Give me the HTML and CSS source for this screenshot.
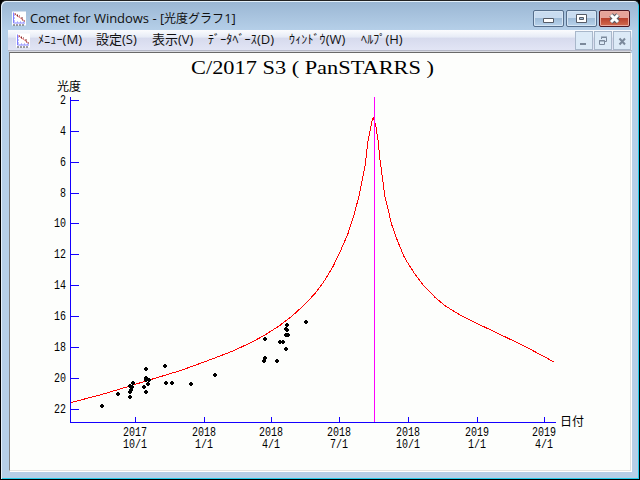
FILE: index.html
```html
<!DOCTYPE html>
<html lang="ja">
<head>
    <meta charset="UTF-8">
    <title>Comet for Windows</title>
    <link rel="stylesheet" href="styles.css">
</head>
<body>
    <svg class="defs" width="0" height="0">
        <symbol id="appIcon" viewBox="0 0 14 14">
            <rect width="14" height="14" fill="#fff"/>
            <path d="M1.5 1V11.5H13M2 3.5h1M2 6.5h1M2 9.5h1M5.5 10v1M8.5 10v1M11.5 10v1" fill="none" stroke="#8080ff"/>
            <path d="M2 2L12.5 9.5" stroke="#f08080"/>
            <path d="M3 2h1v1h-1zM5 3h1v2h-1zM7 4h1v1h-1zM9 6h2v1h-2zM10 8h1v1h-1zM12 9h1v1h-1z" fill="#803030"/>
            <path d="M1 13.5h12" stroke="#444" stroke-dasharray="2 1"/>
        </symbol>
    </svg>
    <div class="window">
        <div class="titlebar">
            <svg class="icon" width="14" height="15"><use href="#appIcon"/></svg>
            <span class="caption">Comet for Windows - [<i>光度グラフ</i>1]</span>
            <div class="buttons">
                <svg class="btn" width="31" height="17"><path d="M10.5 8.5h10v4h-10z" fill="#fff" stroke="#555b66"/></svg>
                <svg class="btn" width="31" height="17"><path d="M10.5 4.5h10v8h-10zM13.5 7.5v2h4v-2z" fill="#fff" fill-rule="evenodd" stroke="#555b66"/></svg>
                <svg class="btn close" width="31" height="17"><path d="M12 5L19 12M19 5L12 12" stroke="#555b66" stroke-width="5"/><path d="M12 5L19 12M19 5L12 12" stroke="#fff" stroke-width="3"/></svg>
            </div>
        </div>
        <div class="menubar">
            <svg class="icon" width="14" height="15"><use href="#appIcon"/></svg>
            <div class="menu">
                <span><i>ﾒﾆｭｰ</i>(M)</span>
                <span>設定(S)</span>
                <span>表示(V)</span>
                <span><i>ﾃﾞｰﾀﾍﾞｰｽ</i>(D)</span>
                <span><i>ｳｨﾝﾄﾞｳ</i>(W)</span>
                <span><i>ﾍﾙﾌﾟ</i>(H)</span>
            </div>
            <div class="mdi">
                <svg class="mdi-btn" width="18" height="19"><path d="M4 12h6" stroke="#7b899b" stroke-width="2"/></svg>
                <svg class="mdi-btn" width="18" height="19"><path d="M6.5 7V5.5h5v4h-2M6 5h6M4.5 8.5h5v4h-5zM4 9h6" fill="none" stroke="#7b899b"/></svg>
                <svg class="mdi-btn" width="18" height="19"><path d="M5.5 6.5L11 12.5M11 6.5L5.5 12.5" stroke="#7b899b" stroke-width="2"/></svg>
            </div>
        </div>
        <div class="client">
            <svg id="graph" width="620" height="417" viewBox="10 53 620 417">
                <text class="title" x="191" y="74" textLength="243" lengthAdjust="spacingAndGlyphs">C/2017 S3 ( PanSTARRS )</text>
                <text class="label" x="57" y="91">光度</text>
                <text class="label" x="560" y="426">日付</text>
                <rect class="axis" x="70" y="97" width="1" height="326"/>
                <rect class="axis" x="70" y="422" width="486" height="1"/>
                <g id="ticks"></g>
                <polyline class="curve" points="71,402.5 100,395 130,386 146,381 180,370.7 200,363.5 220,356 233,351 252,342 265,335 280,325.3 292,316 303.5,305.7 315,293.5 325,280 333,266.5 340,252 348,233.5 353.5,216.8 359.5,194 362.5,178 365.3,165 367.7,143 371.5,123.5 372.5,118.5 373.5,118 374.5,121 376,127 378,140 379.8,158 382.3,177 385,197 388,209 391.5,224 397,239.5 403.5,255.5 407.5,262.5 415,274.3 423.5,285.5 435,297.3 445,305.7 454,311.3 463.5,316.9 477,323.5 493.5,331.3 510,339.2 527,347.5 543,356 554,362"/>
                <rect class="now" x="374" y="97" width="1" height="325"/>
                <g id="dots"></g>
            </svg>
        </div>
    </div>
    <script src="graph.js"></script>
</body>
</html>
```
FILE: styles.css
```css
body {
    margin: 0;
    background-color: #000;
    overflow: hidden;
}

i {
    font-style: normal;
}

.defs {
    position: absolute;
}

.window {
    box-sizing: border-box;
    width: 640px;
    height: 480px;
    padding: 1px 7px 0;
    border: 1px solid #000;
    border-top-color: #222;
    border-radius: 6px 6px 0 0;
    background: linear-gradient(#9ab6d3, #b6d0e9 30px, #b6cfe7 100%);
    box-shadow: inset 1px 1px #e4f0fa, inset -1px -1px #25cbe9;
    font-family: "Open Sans", "Noto Sans CJK JP", sans-serif;
}

.titlebar {
    display: flex;
    height: 28px;
    align-items: flex-start;
}

.titlebar .icon {
    margin: 9px 0 0 4px;
}

.caption {
    margin: 7px 0 0 4px;
    font-size: 13px;
    line-height: 19px;
    letter-spacing: -0.03px;
    white-space: nowrap;
    color: #101010;
}

.caption i {
    font-size: 12px;
    letter-spacing: 0;
}

.buttons {
    display: flex;
    gap: 2px;
    margin: 8px 2px 0 auto;
}

.btn {
    box-sizing: border-box;
    width: 31px;
    height: 17px;
    border: 1px solid #566e8b;
    border-radius: 2px;
    background: linear-gradient(#c9dcf0 48%, #9fbcd8 50%, #b9d3eb);
    box-shadow: inset 0 0 0 1px #d5e5f4;
}

.btn path {
    transform: translate(-1px, -1px);
}

.close {
    border-color: #4b1520;
    background: linear-gradient(#e5a399 48%, #b9412d 50%, #d16c50);
    box-shadow: inset 0 0 0 1px #e8aaa0;
}

.menubar {
    display: flex;
    height: 20px;
    background: linear-gradient(#fbfcfe, #e6ebf6 36%, #d6daed 40%, #e2e5f5);
    border-bottom: 1px solid #b5b8c6;
}

.menubar .icon {
    margin: 3px 8px 0;
}

.menu {
    display: grid;
    grid-template-columns: 58px 56px 56px 81px 72px 60px;
    font-size: 13px;
    line-height: 19px;
    white-space: nowrap;
    color: #101010;
}

.menu i {
    font-size: 12px;
    letter-spacing: 0.15px;
}

.mdi {
    display: flex;
    gap: 1px;
    margin: 1px 1px 0 auto;
}

.mdi-btn {
    box-sizing: border-box;
    border: 1px solid #a8b7ca;
    background-color: #dceaf7;
}

.client {
    height: 417px;
    margin: 1px 1px 0;
    border: 1px solid #808080;
    border-top-color: #696969;
    border-right-color: #e3e3df;
    border-bottom-color: #e3e3df;
    background-color: #fdfefc;
    box-shadow: 1px 1px #fff, 0 -1px #d8dae0;
}

#graph {
    display: block;
    shape-rendering: crispEdges;
}

.title {
    font-family: "Liberation Serif", serif;
    font-size: 19px;
}

.label {
    font-family: "Noto Sans CJK JP", sans-serif;
    font-size: 12px;
}

.num {
    font-family: "Liberation Mono", monospace;
    font-size: 13px;
}

.axis {
    fill: #1400ff;
}

.curve {
    fill: none;
    stroke: #f00;
}

.now {
    fill: #f0f;
}
```
FILE: graph.js
```javascript
const ns = "http://www.w3.org/2000/svg";
const ticks = document.getElementById("ticks");
const dots = document.getElementById("dots");

function add(parent, name, attrs, text) {
    const el = document.createElementNS(ns, name);
    for (const key in attrs) el.setAttribute(key, attrs[key]);
    if (text) el.textContent = text;
    parent.appendChild(el);
}

function addNumber(text, x, y) {
    add(ticks, "text", {
        class: "num", x: x, y: y,
        textLength: text.length * 6, lengthAdjust: "spacingAndGlyphs"
    }, text);
}

// magnitude axis
const magY = [100, 131, 162, 193, 223, 254, 285, 316, 347, 378, 409];
magY.forEach((y, i) => {
    const mag = String((i + 1) * 2);
    add(ticks, "rect", { class: "axis", x: 71, y: y, width: 8, height: 1 });
    addNumber(mag, 66 - mag.length * 6, y + 4);
});

// date axis
const dates = [
    [135, "2017", "10/1"], [204, "2018", "1/1"], [271, "2018", "4/1"],
    [339, "2018", "7/1"], [408, "2018", "10/1"], [477, "2019", "1/1"],
    [544, "2019", "4/1"]
];
dates.forEach(([x, year, day]) => {
    add(ticks, "rect", { class: "axis", x: x, y: 417, width: 1, height: 5 });
    addNumber(year, x - 12, 436);
    addNumber(day, x - day.length * 3, 448);
});

// observations
const points = [
    [102, 406], [118, 394], [130, 386], [133, 383], [132, 387], [131, 390],
    [130, 392], [130, 397], [144, 387], [146, 369], [146, 378], [146, 380],
    [148, 384], [149, 380], [146, 392], [165, 366], [166, 383], [172, 383],
    [191, 384], [215, 375], [306, 322], [287, 325], [286, 329], [287, 330],
    [286, 335], [288, 335], [280, 342], [283, 342], [286, 349], [265, 339],
    [265, 358], [264, 361], [277, 361]
];
points.forEach(([x, y]) => {
    add(dots, "path", { d: `M${x - 1} ${y - 2}h2v1h1v2h-1v1h-2v-1h-1v-2h1z` });
});
```
